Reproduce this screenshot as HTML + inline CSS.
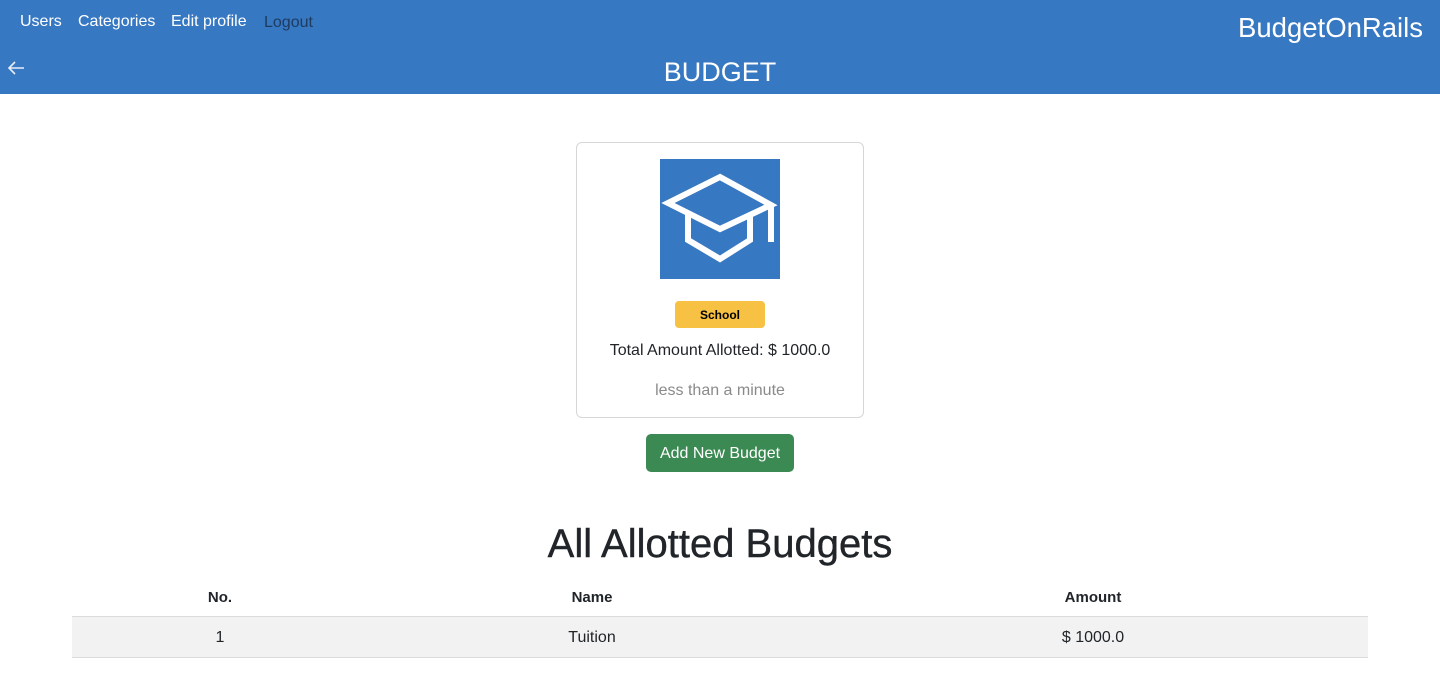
<!DOCTYPE html>
<html><head><style>
body{margin:0;font-family:"Liberation Sans",sans-serif;background:#fff;color:#212529;width:1440px;height:690px;overflow:hidden}
.nav{position:absolute;left:0;top:0;width:1440px;height:94px;background:#3778c2}
.nav a{position:absolute;top:13px;font-size:16px;color:#fff}
.brand{position:absolute;right:17px;top:12px;font-size:27.5px;color:#fff}
.title{position:absolute;left:0;width:1440px;text-align:center;top:57px;font-size:27px;color:#fff}
.card{position:absolute;left:576px;top:142px;width:286px;height:274px;border:1px solid #d6d6d6;border-radius:6px}
.badge{position:absolute;left:675px;top:301px;width:90px;height:27px;background:#f7c144;border-radius:4px;text-align:center;line-height:28px;font-size:12px;font-weight:bold;color:#000}
.btn{position:absolute;left:646px;top:434px;width:148px;height:38px;background:#3b8a53;border-radius:5px;color:#fff;text-align:center;line-height:39px;font-size:16px}
h1{position:absolute;margin:0;top:522px;left:0;width:1440px;text-align:center;font-size:40px;font-weight:normal;-webkit-text-stroke:0.4px #212529}
.c{position:absolute;font-size:16px;transform:translateX(-50%)}
</style></head><body>
<div class="nav">
<a style="left:20px">Users</a><a style="left:78px">Categories</a><a style="left:171px">Edit profile</a><a style="left:264px;color:#1e3b60;top:14px">Logout</a>
<div class="brand">BudgetOnRails</div>
<svg style="position:absolute;left:6px;top:58px" width="20" height="20" viewBox="0 0 20 20"><path d="M18 10H3M9 4L3 10L9 16" stroke="#e8eef7" stroke-width="1.6" fill="none"/></svg>
<div class="title">BUDGET</div>
</div>
<div class="card"></div>
<svg style="position:absolute;left:660px;top:159px" width="120" height="120" viewBox="660 159 120 120">
<rect x="660" y="159" width="120" height="120" fill="#3778c2"/>
<path d="M720 177L668 203L720 229L771 205Z" stroke="#fff" stroke-width="6" fill="none" stroke-linejoin="miter"/>
<path d="M688 213V240L720 259L750 240V213" stroke="#fff" stroke-width="6" fill="none"/>
<path d="M771 205V242" stroke="#fff" stroke-width="6"/>
</svg>
<div class="badge">School</div>
<div class="c" style="left:720px;top:342px">Total Amount Allotted: $ 1000.0</div>
<div class="c" style="left:720px;top:382px;color:#8a8a8a">less than a minute</div>
<div class="btn">Add New Budget</div>
<h1>All Allotted Budgets</h1>
<div class="c" style="left:220px;top:589px;font-weight:bold;font-size:15px">No.</div>
<div class="c" style="left:592px;top:589px;font-weight:bold;font-size:15px">Name</div>
<div class="c" style="left:1093px;top:589px;font-weight:bold;font-size:15px">Amount</div>
<div style="position:absolute;left:72px;top:616px;width:1296px;height:40px;background:#f2f2f2;border-top:1px solid #dcdcdc;border-bottom:1px solid #dcdcdc"></div>
<div class="c" style="left:220px;top:629px">1</div>
<div class="c" style="left:592px;top:629px">Tuition</div>
<div class="c" style="left:1093px;top:629px">$ 1000.0</div>
</body></html>
